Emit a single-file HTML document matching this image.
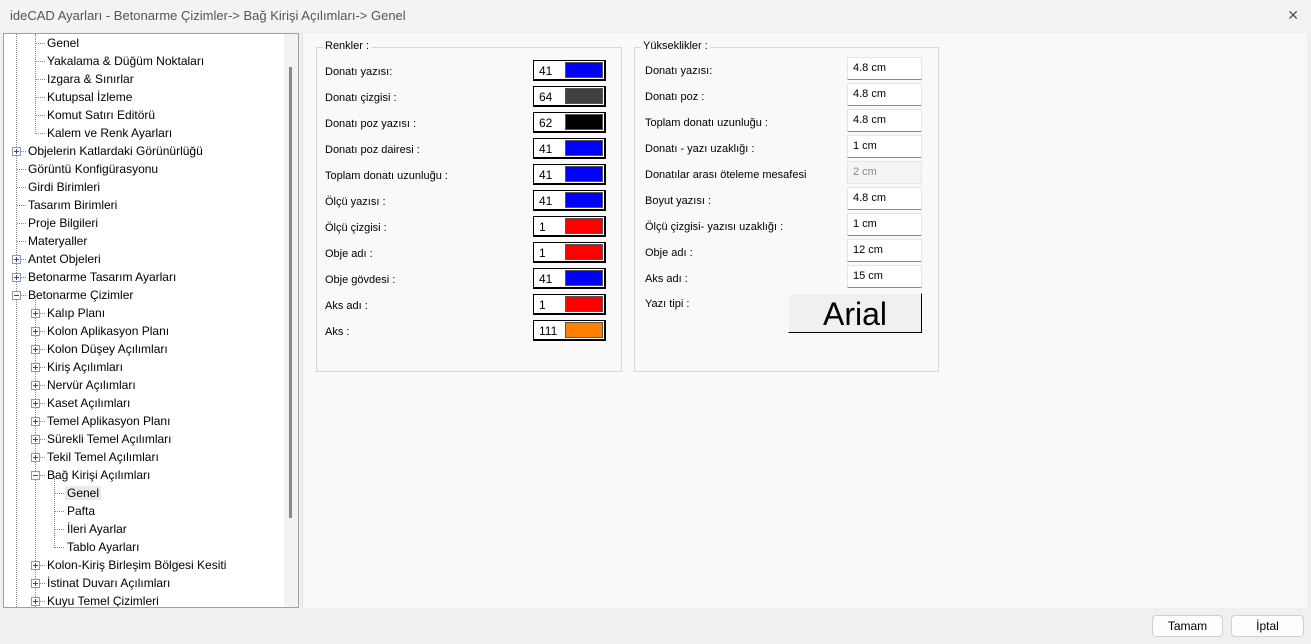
<!DOCTYPE html>
<html><head><meta charset="utf-8"><style>
*{margin:0;padding:0;box-sizing:border-box}
body{width:1311px;height:644px;background:#f0f0f0;font-family:"Liberation Sans","DejaVu Sans",sans-serif;font-size:12px;color:#000;position:relative;overflow:hidden}
.a{position:absolute}
.title{left:0;top:0;width:1311px;height:31px;background:#f3f3f3;color:#555;font-size:13px;line-height:31px;padding-left:10px}
.tree{left:3px;top:33px;width:296px;height:575px;background:#fff;border:1px solid #a0a0a0;overflow:hidden}
.row{position:absolute;height:18px;line-height:18px;white-space:nowrap}
.vl{position:absolute;width:0;border-left:1px dotted #888}
.hl{position:absolute;height:0;border-top:1px dotted #888;width:9px}
.bx{position:absolute;width:9px;height:9px;border:1px solid #8a9ab0;background:#fff}
.bx:before{content:"";position:absolute;left:1px;top:3px;width:5px;height:1px;background:#2a4a9a}
.pl:after{content:"";position:absolute;left:3px;top:1px;width:1px;height:5px;background:#2a4a9a}
.right{left:302px;top:33px;width:1005px;height:575px;background:#f9f9f9;border-left:1px solid #e0e0e0}
.grp{position:absolute;border:1px solid #d8d8d8}
.gt{position:absolute;top:-8px;left:6px;background:#f9f9f9;padding:0 2px;font-size:11px;color:#000}
.lb{position:absolute;font-size:11px}
.cb{position:absolute;width:73px;height:21px;border:1px solid #000;border-right:2px solid #000;border-bottom:2px solid #000;background:#fff}
.cb span{position:absolute;left:5px;top:3px;font-size:12px}
.cb i{position:absolute;left:31px;top:1px;right:1px;bottom:1px;border:1px solid #555}
.in{position:absolute;width:75px;height:23px;background:#fff;border-bottom:1px solid #888;border-top:1px solid #e5e5e5;border-left:1px solid #e5e5e5;border-right:1px solid #e5e5e5;font-size:11px;padding:4px 0 0 5px}
.btn{position:absolute;height:22px;background:#fdfdfd;border:1px solid #d0d0d0;border-radius:4px;text-align:center;line-height:20px;font-size:12px}
</style></head><body>
<div class="a title">ideCAD Ayarları - Betonarme Çizimler-&gt; Bağ Kirişi Açılımları-&gt; Genel<span style="position:absolute;right:12px;top:0;font-size:14px;color:#555">✕</span></div>
<div class="a tree">
<div class="vl" style="left:12px;top:0;height:575px"></div>
<div class="vl" style="left:31px;top:0;height:100px"></div>
<div class="vl" style="left:31px;top:262px;height:313px"></div>
<div class="vl" style="left:50px;top:442px;height:72px"></div>
<div style="position:absolute;left:280px;top:0;width:15px;height:575px;background:#f3f3f3"></div>
<div style="position:absolute;left:285px;top:33px;width:3px;height:451px;background:#8a8a8a"></div>

<div class="row" style="top:0;left:31px"><i class="hl" style="left:1px;top:9px"></i><span style="margin-left:12px">Genel</span></div>
<div class="row" style="top:18px;left:31px"><i class="hl" style="left:1px;top:9px"></i><span style="margin-left:12px">Yakalama &amp; Düğüm Noktaları</span></div>
<div class="row" style="top:36px;left:31px"><i class="hl" style="left:1px;top:9px"></i><span style="margin-left:12px">Izgara &amp; Sınırlar</span></div>
<div class="row" style="top:54px;left:31px"><i class="hl" style="left:1px;top:9px"></i><span style="margin-left:12px">Kutupsal İzleme</span></div>
<div class="row" style="top:72px;left:31px"><i class="hl" style="left:1px;top:9px"></i><span style="margin-left:12px">Komut Satırı Editörü</span></div>
<div class="row" style="top:90px;left:31px"><i class="hl" style="left:1px;top:9px"></i><span style="margin-left:12px">Kalem ve Renk Ayarları</span></div>

<div class="row" style="top:108px;left:12px"><i class="hl" style="left:1px;top:9px"></i><i class="bx pl" style="left:-4px;top:5px"></i><span style="margin-left:12px">Objelerin Katlardaki Görünürlüğü</span></div>
<div class="row" style="top:126px;left:12px"><i class="hl" style="left:1px;top:9px"></i><span style="margin-left:12px">Görüntü Konfigürasyonu</span></div>
<div class="row" style="top:144px;left:12px"><i class="hl" style="left:1px;top:9px"></i><span style="margin-left:12px">Girdi Birimleri</span></div>
<div class="row" style="top:162px;left:12px"><i class="hl" style="left:1px;top:9px"></i><span style="margin-left:12px">Tasarım Birimleri</span></div>
<div class="row" style="top:180px;left:12px"><i class="hl" style="left:1px;top:9px"></i><span style="margin-left:12px">Proje Bilgileri</span></div>
<div class="row" style="top:198px;left:12px"><i class="hl" style="left:1px;top:9px"></i><span style="margin-left:12px">Materyaller</span></div>
<div class="row" style="top:216px;left:12px"><i class="hl" style="left:1px;top:9px"></i><i class="bx pl" style="left:-4px;top:5px"></i><span style="margin-left:12px">Antet Objeleri</span></div>
<div class="row" style="top:234px;left:12px"><i class="hl" style="left:1px;top:9px"></i><i class="bx pl" style="left:-4px;top:5px"></i><span style="margin-left:12px">Betonarme Tasarım Ayarları</span></div>
<div class="row" style="top:252px;left:12px"><i class="hl" style="left:1px;top:9px"></i><i class="bx" style="left:-4px;top:5px"></i><span style="margin-left:12px">Betonarme Çizimler</span></div>

<div class="row" style="top:270px;left:31px"><i class="hl" style="left:1px;top:9px"></i><i class="bx pl" style="left:-4px;top:5px"></i><span style="margin-left:12px">Kalıp Planı</span></div>
<div class="row" style="top:288px;left:31px"><i class="hl" style="left:1px;top:9px"></i><i class="bx pl" style="left:-4px;top:5px"></i><span style="margin-left:12px">Kolon Aplikasyon Planı</span></div>
<div class="row" style="top:306px;left:31px"><i class="hl" style="left:1px;top:9px"></i><i class="bx pl" style="left:-4px;top:5px"></i><span style="margin-left:12px">Kolon Düşey Açılımları</span></div>
<div class="row" style="top:324px;left:31px"><i class="hl" style="left:1px;top:9px"></i><i class="bx pl" style="left:-4px;top:5px"></i><span style="margin-left:12px">Kiriş Açılımları</span></div>
<div class="row" style="top:342px;left:31px"><i class="hl" style="left:1px;top:9px"></i><i class="bx pl" style="left:-4px;top:5px"></i><span style="margin-left:12px">Nervür Açılımları</span></div>
<div class="row" style="top:360px;left:31px"><i class="hl" style="left:1px;top:9px"></i><i class="bx pl" style="left:-4px;top:5px"></i><span style="margin-left:12px">Kaset Açılımları</span></div>
<div class="row" style="top:378px;left:31px"><i class="hl" style="left:1px;top:9px"></i><i class="bx pl" style="left:-4px;top:5px"></i><span style="margin-left:12px">Temel Aplikasyon Planı</span></div>
<div class="row" style="top:396px;left:31px"><i class="hl" style="left:1px;top:9px"></i><i class="bx pl" style="left:-4px;top:5px"></i><span style="margin-left:12px">Sürekli Temel Açılımları</span></div>
<div class="row" style="top:414px;left:31px"><i class="hl" style="left:1px;top:9px"></i><i class="bx pl" style="left:-4px;top:5px"></i><span style="margin-left:12px">Tekil Temel Açılımları</span></div>
<div class="row" style="top:432px;left:31px"><i class="hl" style="left:1px;top:9px"></i><i class="bx" style="left:-4px;top:5px"></i><span style="margin-left:12px">Bağ Kirişi Açılımları</span></div>

<div class="row" style="top:450px;left:50px"><i class="hl" style="left:1px;top:9px"></i><span style="margin-left:11px;background:#eaeaea;padding:0 2px">Genel</span></div>
<div class="row" style="top:468px;left:50px"><i class="hl" style="left:1px;top:9px"></i><span style="margin-left:13px">Pafta</span></div>
<div class="row" style="top:486px;left:50px"><i class="hl" style="left:1px;top:9px"></i><span style="margin-left:13px">İleri Ayarlar</span></div>
<div class="row" style="top:504px;left:50px"><i class="hl" style="left:1px;top:9px"></i><span style="margin-left:13px">Tablo Ayarları</span></div>

<div class="row" style="top:522px;left:31px"><i class="hl" style="left:1px;top:9px"></i><i class="bx pl" style="left:-4px;top:5px"></i><span style="margin-left:12px">Kolon-Kiriş Birleşim Bölgesi Kesiti</span></div>
<div class="row" style="top:540px;left:31px"><i class="hl" style="left:1px;top:9px"></i><i class="bx pl" style="left:-4px;top:5px"></i><span style="margin-left:12px">İstinat Duvarı Açılımları</span></div>
<div class="row" style="top:558px;left:31px"><i class="hl" style="left:1px;top:9px"></i><i class="bx pl" style="left:-4px;top:5px"></i><span style="margin-left:12px">Kuyu Temel Çizimleri</span></div>
</div>

<div class="a right"></div>
<div class="grp" style="left:316px;top:47px;width:306px;height:325px"><span class="gt">Renkler :</span></div>
<div class="lb" style="left:325px;top:66px">Donatı yazısı:</div>
<div class="lb" style="left:325px;top:92px">Donatı çizgisi :</div>
<div class="lb" style="left:325px;top:118px">Donatı poz yazısı :</div>
<div class="lb" style="left:325px;top:144px">Donatı poz dairesi :</div>
<div class="lb" style="left:325px;top:170px">Toplam donatı uzunluğu :</div>
<div class="lb" style="left:325px;top:196px">Ölçü yazısı :</div>
<div class="lb" style="left:325px;top:222px">Ölçü çizgisi :</div>
<div class="lb" style="left:325px;top:248px">Obje adı :</div>
<div class="lb" style="left:325px;top:274px">Obje gövdesi :</div>
<div class="lb" style="left:325px;top:300px">Aks adı :</div>
<div class="lb" style="left:325px;top:326px">Aks :</div>
<div class="cb" style="left:533px;top:60px"><span>41</span><i style="background:#0000ff"></i></div>
<div class="cb" style="left:533px;top:86px"><span>64</span><i style="background:#404040"></i></div>
<div class="cb" style="left:533px;top:112px"><span>62</span><i style="background:#000"></i></div>
<div class="cb" style="left:533px;top:138px"><span>41</span><i style="background:#0000ff"></i></div>
<div class="cb" style="left:533px;top:164px"><span>41</span><i style="background:#0000ff"></i></div>
<div class="cb" style="left:533px;top:190px"><span>41</span><i style="background:#0000ff"></i></div>
<div class="cb" style="left:533px;top:216px"><span>1</span><i style="background:#ff0000"></i></div>
<div class="cb" style="left:533px;top:242px"><span>1</span><i style="background:#ff0000"></i></div>
<div class="cb" style="left:533px;top:268px"><span>41</span><i style="background:#0000ff"></i></div>
<div class="cb" style="left:533px;top:294px"><span>1</span><i style="background:#ff0000"></i></div>
<div class="cb" style="left:533px;top:320px"><span>111</span><i style="background:#ff8000"></i></div>

<div class="grp" style="left:634px;top:47px;width:305px;height:325px"><span class="gt">Yükseklikler :</span></div>
<div class="lb" style="left:645px;top:65px">Donatı yazısı:</div>
<div class="lb" style="left:645px;top:91px">Donatı poz :</div>
<div class="lb" style="left:645px;top:117px">Toplam donatı uzunluğu :</div>
<div class="lb" style="left:645px;top:143px">Donatı - yazı uzaklığı :</div>
<div class="lb" style="left:645px;top:169px">Donatılar arası öteleme mesafesi</div>
<div class="lb" style="left:645px;top:195px">Boyut yazısı :</div>
<div class="lb" style="left:645px;top:221px">Ölçü çizgisi- yazısı uzaklığı :</div>
<div class="lb" style="left:645px;top:247px">Obje adı :</div>
<div class="lb" style="left:645px;top:273px">Aks adı :</div>
<div class="lb" style="left:645px;top:298px">Yazı tipi :</div>
<div class="in" style="left:847px;top:57px">4.8 cm</div>
<div class="in" style="left:847px;top:83px">4.8 cm</div>
<div class="in" style="left:847px;top:109px">4.8 cm</div>
<div class="in" style="left:847px;top:135px">1 cm</div>
<div class="in" style="left:847px;top:161px;background:#f5f5f5;color:#888;border-bottom-color:#e5e5e5">2 cm</div>
<div class="in" style="left:847px;top:187px">4.8 cm</div>
<div class="in" style="left:847px;top:213px">1 cm</div>
<div class="in" style="left:847px;top:239px">12 cm</div>
<div class="in" style="left:847px;top:265px">15 cm</div>
<div class="a" style="left:788px;top:293px;width:134px;height:40px;background:#f0f0f0;border-top:1px solid #fff;border-left:1px solid #fff;border-right:1px solid #000;border-bottom:1px solid #000;font-size:32px;text-align:center;line-height:40px">Arial</div>

<div class="btn" style="left:1152px;top:615px;width:71px">Tamam</div>
<div class="btn" style="left:1231px;top:615px;width:73px">İptal</div>
</body></html>
